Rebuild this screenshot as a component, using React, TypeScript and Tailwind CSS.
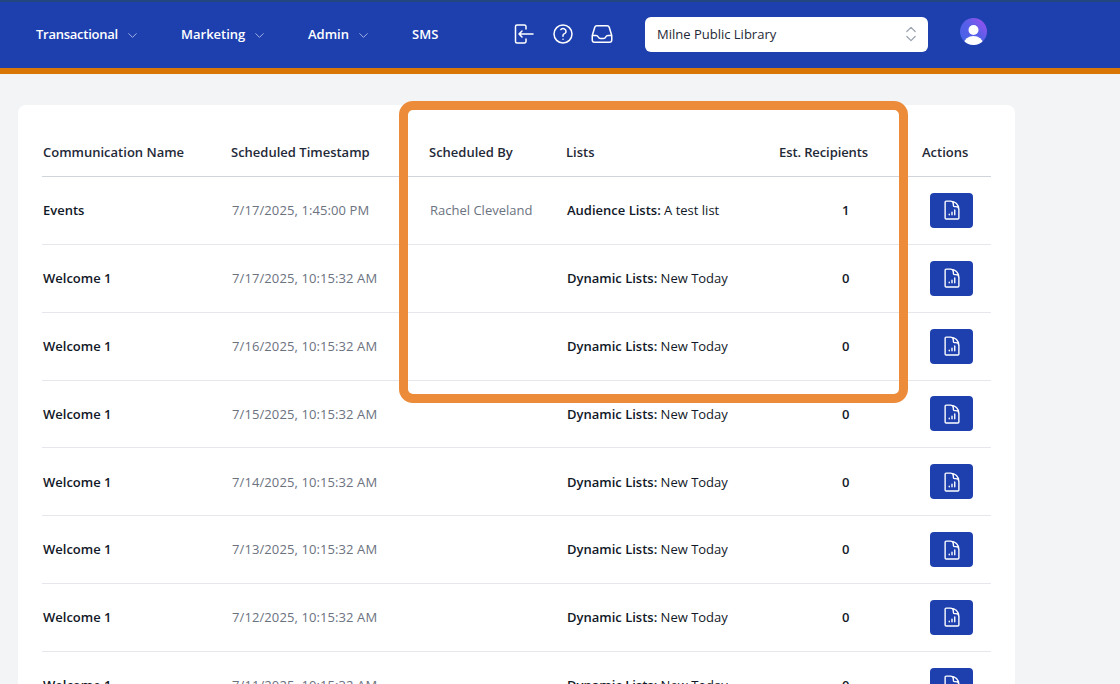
import { ChevronDown, ChevronsUpDown } from "lucide-react";
import { HiOutlineDocumentChartBar, HiOutlineInbox, HiOutlineQuestionMarkCircle } from "react-icons/hi2";

const rows = [
  { name: "Events", time: "7/17/2025, 1:45:00 PM", by: "Rachel Cleveland", listType: "Audience Lists:", list: "A test list", count: 1 },
  { name: "Welcome 1", time: "7/17/2025, 10:15:32 AM", by: "", listType: "Dynamic Lists:", list: "New Today", count: 0 },
  { name: "Welcome 1", time: "7/16/2025, 10:15:32 AM", by: "", listType: "Dynamic Lists:", list: "New Today", count: 0 },
  { name: "Welcome 1", time: "7/15/2025, 10:15:32 AM", by: "", listType: "Dynamic Lists:", list: "New Today", count: 0 },
  { name: "Welcome 1", time: "7/14/2025, 10:15:32 AM", by: "", listType: "Dynamic Lists:", list: "New Today", count: 0 },
  { name: "Welcome 1", time: "7/13/2025, 10:15:32 AM", by: "", listType: "Dynamic Lists:", list: "New Today", count: 0 },
  { name: "Welcome 1", time: "7/12/2025, 10:15:32 AM", by: "", listType: "Dynamic Lists:", list: "New Today", count: 0 },
  { name: "Welcome 1", time: "7/11/2025, 10:15:32 AM", by: "", listType: "Dynamic Lists:", list: "New Today", count: 0 },
];

function NavItem({ label, menu, width, tight }: { label: string; menu?: boolean; width: string; tight?: boolean }) {
  return (
    <div className={`flex items-center gap-[7px] pt-[2px] ${width}`}>
      <span className={`text-[13px] font-semibold text-white ${tight ? "tracking-[-0.25px]" : ""}`}>{label}</span>
      {menu && <ChevronDown className="h-[15px] w-[15px] text-[#a9b8e4]" strokeWidth={1.5} />}
    </div>
  );
}

function PhoneArrowIcon() {
  return (
    <svg viewBox="0 0 24 24" className="h-6 w-6 text-white" fill="none" stroke="currentColor" strokeWidth={1.5} strokeLinecap="round" strokeLinejoin="round">
      <path d="M14 7V4.5A1.5 1.5 0 0 0 12.5 3h-7.5A1.5 1.5 0 0 0 3.5 4.5v15A1.5 1.5 0 0 0 5 21h7.5a1.5 1.5 0 0 0 1.5-1.5V17" />
      <path d="M21 12H7m0 0 3-3m-3 3 3 3" />
    </svg>
  );
}

function Avatar() {
  return (
    <svg viewBox="0 0 27 27" className="h-[27px] w-[27px]">
      <defs>
        <linearGradient id="avatar-bg" x1="0" y1="1" x2="1" y2="0">
          <stop offset="0" stopColor="#3f63e6" />
          <stop offset="0.55" stopColor="#5a5fe8" />
          <stop offset="1" stopColor="#a64df2" />
        </linearGradient>
        <clipPath id="avatar-clip">
          <circle cx="13.5" cy="13.5" r="13.5" />
        </clipPath>
      </defs>
      <circle cx="13.5" cy="13.5" r="13.5" fill="url(#avatar-bg)" />
      <g clipPath="url(#avatar-clip)" fill="#fff">
        <circle cx="13.5" cy="12" r="5" />
        <ellipse cx="13.5" cy="25.5" rx="9.5" ry="7.5" />
      </g>
    </svg>
  );
}

export default function App() {
  return (
    <div className="h-[684px] overflow-hidden bg-[#f3f4f6] font-['Open_Sans',sans-serif] relative">
      <header className="flex h-[74px] items-start border-t-2 border-b-[6px] border-t-[#24467f] border-b-[#d97706] bg-[#1e40af] pl-9">
        <div className="flex h-[66px] items-center pb-[2px]">
          <NavItem label="Transactional" menu tight width="w-[145px]" />
          <NavItem label="Marketing" menu width="w-[127px]" />
          <NavItem label="Admin" menu width="w-[104px]" />
          <NavItem label="SMS" width="w-[100px]" />
          <div className="flex w-[133px] items-center gap-[15px] text-white">
            <PhoneArrowIcon />
            <HiOutlineQuestionMarkCircle className="h-6 w-6" />
            <HiOutlineInbox className="h-6 w-6" />
          </div>
          <div className="flex h-[35px] w-[283px] items-center justify-between rounded-md bg-white pl-3 pr-[7px]">
            <span className="pt-[2px] text-[13px] text-[#1f2937]">Milne Public Library</span>
            <ChevronsUpDown className="h-5 w-5 text-[#9ca3af]" strokeWidth={1.5} />
          </div>
          <div className="ml-8 -mt-[6px]">
            <Avatar />
          </div>
        </div>
      </header>

      <main className="pl-[18px] pt-[31px]">
        <div className="w-[997px] rounded-lg bg-white px-6 pt-[31px]">
          <div className="grid h-[41px] grid-cols-[188px_199px_137px_212px_143px_70px] items-center border-b border-[#d1d5db] pb-[6px] text-[13px] font-semibold text-[#1f2937]">
            <div className="pl-[1px]">Communication Name</div>
            <div className="pl-[1px]">Scheduled Timestamp</div>
            <div>Scheduled By</div>
            <div>Lists</div>
            <div className="pl-[1px] tracking-[-0.1px]">Est. Recipients</div>
            <div className="pl-[1px]">Actions</div>
          </div>
          {rows.map((row, i) => (
            <div key={i} className="grid h-[67.85px] grid-cols-[188px_199px_137px_212px_143px_70px] items-center border-b border-[#e5e7eb] text-[13px] [&>div]:pt-[1px]">
              <div className="pl-[1px] font-semibold text-[#111827]">{row.name}</div>
              <div className="pl-[2px] tracking-[0.1px] text-[#6b7280]">{row.time}</div>
              <div className="pl-[1px] text-[#6b7280]">{row.by}</div>
              <div className="pl-[1px] text-[#111827]">
                <span className="font-semibold">{row.listType}</span> {row.list}
              </div>
              <div className="pl-[64px] font-semibold text-[#111827]">{row.count}</div>
              <button className="ml-[9px] flex h-[35px] w-[43px] items-center justify-center rounded bg-[#1e40af] text-white">
                <HiOutlineDocumentChartBar className="h-[22px] w-[22px]" />
              </button>
            </div>
          ))}
        </div>
      </main>

      {/* highlight drawn over the screenshot */}
      <div className="pointer-events-none absolute left-[399px] top-[101px] h-[302px] w-[509px] rounded-[14px] border-[9px] border-[#ec8b3a]" />
    </div>
  );
}
